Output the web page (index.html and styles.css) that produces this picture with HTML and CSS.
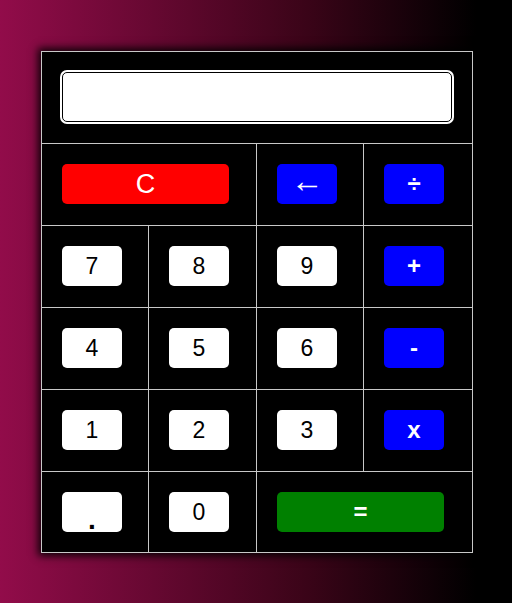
FILE: index.html
```html
<!DOCTYPE html>
<html lang="en">
<head>
<meta charset="utf-8">
<title>Calculator</title>
<link rel="stylesheet" href="styles.css">
</head>
<body>
<div class="calc">
  <div class="cell span4 display-cell"><input class="display" type="text" value=""></div>
  <div class="cell span2"><button class="btn red wide">C</button></div>
  <div class="cell"><button class="btn blue arrow">&larr;</button></div>
  <div class="cell"><button class="btn blue op">&divide;</button></div>
  <div class="cell"><button class="btn white">7</button></div>
  <div class="cell"><button class="btn white">8</button></div>
  <div class="cell"><button class="btn white">9</button></div>
  <div class="cell"><button class="btn blue op">+</button></div>
  <div class="cell"><button class="btn white">4</button></div>
  <div class="cell"><button class="btn white">5</button></div>
  <div class="cell"><button class="btn white">6</button></div>
  <div class="cell"><button class="btn blue op">-</button></div>
  <div class="cell"><button class="btn white">1</button></div>
  <div class="cell"><button class="btn white">2</button></div>
  <div class="cell"><button class="btn white">3</button></div>
  <div class="cell"><button class="btn blue op">x</button></div>
  <div class="cell"><button class="btn white dot">.</button></div>
  <div class="cell"><button class="btn white">0</button></div>
  <div class="cell span2"><button class="btn green wide op">=</button></div>
</div>
</body>
</html>
```
FILE: styles.css
```css
html, body {
  margin: 0;
  padding: 0;
}
body {
  width: 512px;
  height: 603px;
  background: linear-gradient(90deg, #920c4a 0%, #3a0418 60%, #000 93%);
  font-family: "Liberation Sans", Arial, sans-serif;
  padding-top: 51px;
  padding-left: 41px;
  box-sizing: border-box;
}
.calc {
  display: grid;
  grid-template-columns: 106px 107px 106px 108px;
  grid-template-rows: 91px 81px 81px 81px 81px 80px;
  gap: 1px;
  width: 432px;
  height: 502px;
  box-sizing: border-box;
  border: 1px solid #c8c8c8;
  background: #c8c8c8;
  box-shadow: 0 0 8px 3px rgba(0, 0, 0, 0.9);
}
.cell {
  background: #000;
  padding: 20px 0 0 20px;
  box-sizing: border-box;
}
.span4 { grid-column: span 4; }
.span2 { grid-column: span 2; }
.display {
  display: block;
  width: 390px;
  height: 50px;
  box-sizing: border-box;
  border: 1px solid #000;
  border-radius: 5px;
  background: #fff;
  box-shadow: 0 0 0 2px #fff;
  margin: 0;
  padding: 0 8px;
  font-size: 24px;
  font-family: "Liberation Sans", Arial, sans-serif;
  outline: none;
}
.btn {
  display: block;
  width: 60px;
  height: 40px;
  margin: 0;
  padding: 0;
  border: none;
  border-radius: 5px;
  font-family: "Liberation Sans", Arial, sans-serif;
  font-size: 23px;
  line-height: 40px;
  text-align: center;
}
.wide { width: 167px; }
.red { background: #ff0000; color: #fff; font-size: 27px; }
.blue { background: #0000ff; color: #fff; font-size: 30px; }
.arrow { font-size: 33px; line-height: 30px; padding-bottom: 6px; }
.green { background: #008000; color: #fff; }
.white { background: #fff; color: #000; }
.op { font-weight: bold; font-size: 24px; }
.dot { font-weight: bold; font-size: 28px; line-height: 56px; }
```
